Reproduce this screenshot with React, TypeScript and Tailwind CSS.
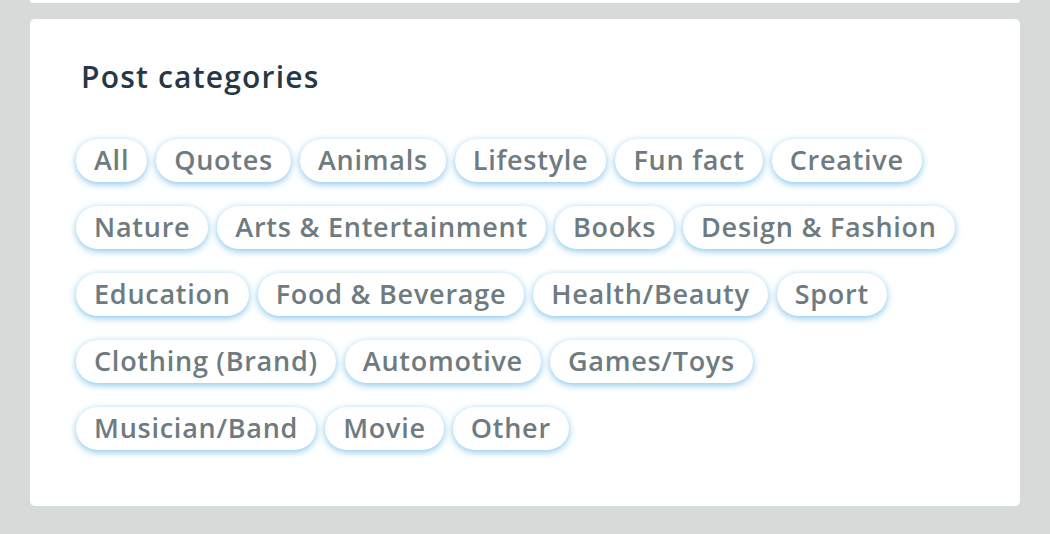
const categories = [
    'All',
    'Quotes',
    'Animals',
    'Lifestyle',
    'Fun fact',
    'Creative',
    'Nature',
    'Arts & Entertainment',
    'Books',
    'Design & Fashion',
    'Education',
    'Food & Beverage',
    'Health/Beauty',
    'Sport',
    'Clothing (Brand)',
    'Automotive',
    'Games/Toys',
    'Musician/Band',
    'Movie',
    'Other',
];

export default function App() {
    return (
        <div className="h-[534px] w-[1050px] overflow-hidden bg-[#d6dad9] px-[30px] font-['Open_Sans',sans-serif]">
            <div className="h-[3px] rounded-b-[5px] bg-white" />
            <div className="mt-4 rounded-[5px] bg-white pt-[38px] pr-[46px] pb-[56px] pl-[46px]">
                <p className="ml-[5px] text-[30px] leading-[40px] font-semibold tracking-[1.2px] text-[#263846]">Post categories</p>
                <div className="mt-[42px] flex flex-wrap gap-x-[9px] gap-y-[24px]">
                    {categories.map((label) => (
                        <button
                            key={label}
                            className="flex h-[43px] cursor-pointer items-center rounded-full bg-white px-[18px] text-[27px] font-semibold tracking-[0.75px] text-[#6e7b80] shadow-[0_2px_7px_rgba(90,178,230,0.75)]"
                        >
                            {label}
                        </button>
                    ))}
                </div>
            </div>
        </div>
    );
}
